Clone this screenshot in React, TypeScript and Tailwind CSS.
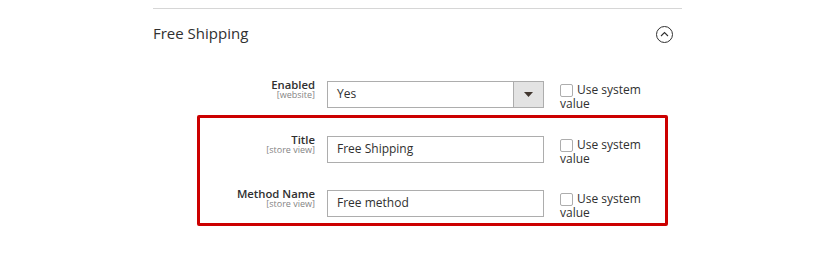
import React from "react";

function Checkbox() {
  return (
    <div className="w-[96px] text-[12px] leading-[14px] text-[#303030] pt-[2px]">
      <span className="inline-block w-[13px] h-[13px] border border-[#adadad] rounded-[2px] bg-white align-[-3px] mr-[4px]" />
      Use system value
    </div>
  );
}

function Row({ label, scope, children }: { label: string; scope: string; children: React.ReactNode }) {
  return (
    <div className="flex items-start">
      <div className="w-[115px] text-right -mt-[2px]">
        <div className="text-[11.3px] leading-[11px] font-semibold text-[#303030]">{label}</div>
        <div className="text-[9px] leading-[9px] text-[#858585]">{scope}</div>
      </div>
      <div className="ml-[12px] w-[217px]">{children}</div>
      <div className="ml-[16px]">
        <Checkbox />
      </div>
    </div>
  );
}

function TextInput({ value }: { value: string }) {
  return (
    <div className="h-[27px] border border-[#adadad] bg-white px-[9px] pb-[2px] flex items-center text-[12px] text-[#303030]">
      {value}
    </div>
  );
}

function Select() {
  return (
    <div className="h-[27px] border border-[#adadad] bg-white flex items-stretch text-[12px] text-[#303030]">
      <div className="flex-1 px-[9px] pb-[2px] flex items-center">Yes</div>
      <div className="w-[30px] bg-[#e3e3e3] border-l border-[#adadad] flex items-center justify-center">
        <svg width="9" height="5" viewBox="0 0 9 5">
          <path d="M0 0 L9 0 L4.5 5 Z" fill="#41362f" />
        </svg>
      </div>
    </div>
  );
}

export default function App() {
  return (
    <div className="w-[837px] h-[268px] bg-white overflow-hidden" style={{ fontFamily: '"Open Sans", "Noto Sans", sans-serif' }}>
      <div className="pt-[8px] pl-[153px]">
        <div className="w-[529px] border-t border-[#d6d6d6]">
          <div className="flex items-center justify-between h-[50px]">
            <div className="text-[15px] text-[#303030] -mt-[2px]">Free Shipping</div>
            <div className="mr-[9px] w-[17px] h-[17px] rounded-full border border-[#303030] flex items-center justify-center">
              <svg width="9" height="6" viewBox="0 0 9 6">
                <path d="M1 5 L4.5 1.5 L8 5" fill="none" stroke="#303030" strokeWidth="1.1" />
              </svg>
            </div>
          </div>
          <div className="pt-[22px] pl-[47px]">
            <Row label="Enabled" scope="[website]">
              <Select />
            </Row>
          </div>
          <div className="mt-[4px] ml-[44px] w-[471px] border-[3px] border-[#cc0000] rounded-[2px] pt-[18px] pb-[3px]">
            <div className="flex flex-col gap-[24px]">
              <Row label="Title" scope="[store view]">
                <TextInput value="Free Shipping" />
              </Row>
              <Row label="Method Name" scope="[store view]">
                <TextInput value="Free method" />
              </Row>
            </div>
          </div>
        </div>
      </div>
    </div>
  );
}
